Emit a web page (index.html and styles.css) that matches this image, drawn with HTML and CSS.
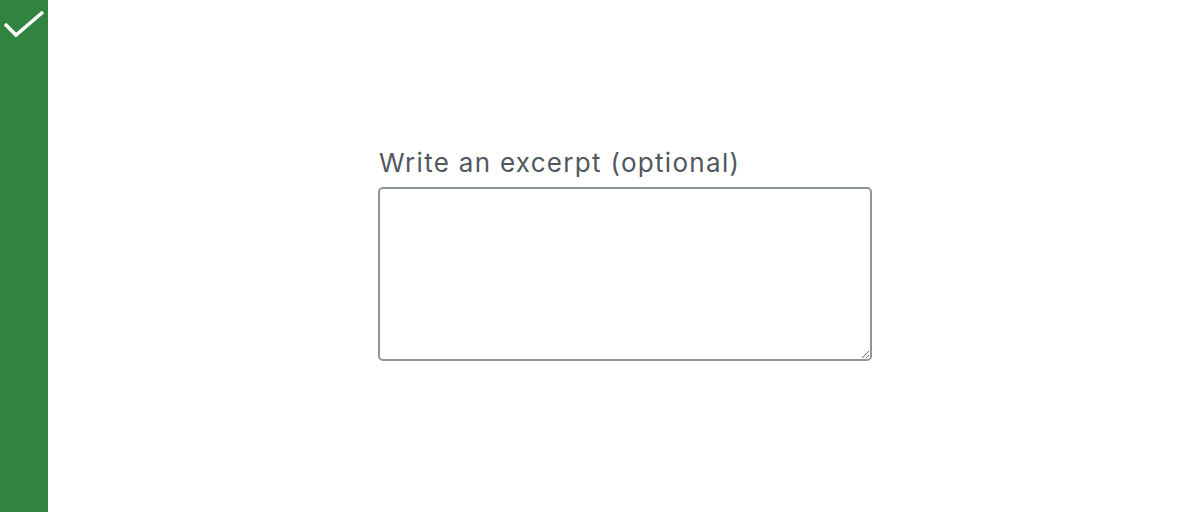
FILE: index.html
```html
<!DOCTYPE html>
<html lang="en">
<head>
    <meta charset="UTF-8">
    <title>Excerpt</title>
    <link rel="stylesheet" href="styles.css">
</head>
<body>
    <div class="sidebar">
        <svg class="check" width="48" height="48" viewBox="0 0 48 48">
            <path d="M5 24 L16 35 L43 12" fill="none" stroke="#fff" stroke-width="3.5"/>
        </svg>
    </div>
    <div class="main">
        <div class="field">
            <label for="excerpt" class="label">Write an excerpt (optional)</label>
            <textarea id="excerpt" class="excerpt"></textarea>
        </div>
    </div>
</body>
</html>
```

FILE: styles.css
```css
body { margin: 0; height: 512px; display: flex; font-family: Inter, "Liberation Sans", Arial, sans-serif; background: #fff; }
.sidebar { width: 48px; background-color: #31843f; flex-shrink: 0; }
.check { display: block; }
.main { flex: 1; display: flex; align-items: center; justify-content: center; }
.field { display: flex; flex-direction: column; width: 494px; margin: 0 0 2px 2px; }
.label { color: #50575e; font-size: 26px; line-height: 28px; letter-spacing: 1.3px; margin: 0 0 10px 1px; }
.excerpt { box-sizing: border-box; width: 494px; height: 174px; border: 2px solid #8f959b; border-radius: 5px; padding: 8px; font-family: inherit; font-size: 16px; resize: vertical; }
```
